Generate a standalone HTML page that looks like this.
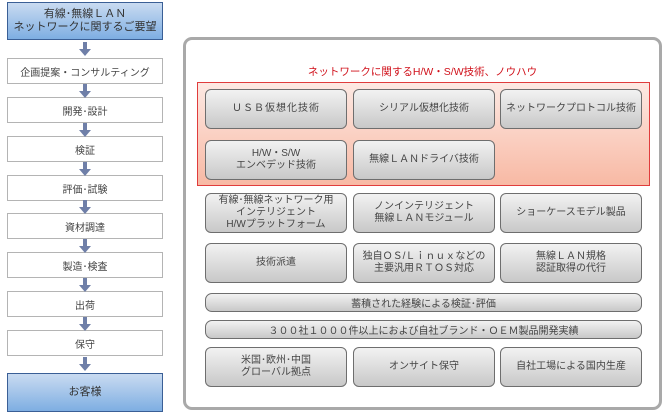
<!DOCTYPE html>
<html><head><meta charset="utf-8"><style>
*{margin:0;padding:0;box-sizing:border-box}
body{width:670px;height:414px;background:#fff;position:relative;overflow:hidden;font-family:"Liberation Sans","Noto Sans CJK JP",sans-serif;color:#444}
.a{position:absolute;display:flex;align-items:center;justify-content:center;text-align:center}
.s{left:7px;width:156px;height:26px;border:1px solid #b4b4b4;background:#fff;font-size:10px;color:#444}
.blue{left:7px;width:156px;border:1px solid #3a5f96;background:linear-gradient(#c9dbf1,#7eaee2);font-size:11px;color:#333;line-height:13px}
.ar{position:absolute;left:78px;width:14px;height:14px}
.panel{position:absolute;left:183px;top:37px;width:479px;height:373px;border:3px solid #a9a9a9;border-radius:9px;background:#fff}
.red{position:absolute;left:197px;top:82px;width:453px;height:104px;border:1px solid #e03c3c;background:linear-gradient(#fde9e3,#f8b9a4)}
.b{border:1px solid #6e6e6e;border-radius:6px;background:linear-gradient(#f2f2f2,#c8c8c8);font-size:10px;color:#444;line-height:12px;width:142px;height:40px}
.bar{left:205px;width:437px;height:19px;border:1px solid #6e6e6e;border-radius:7px;background:linear-gradient(#f2f2f2,#c8c8c8);font-size:10px;color:#444}
.t{position:absolute;left:183px;width:479px;top:64px;text-align:center;color:#d0101a;font-size:10.5px}
</style></head><body>
<div class="a blue" style="top:2px;height:38px">有線･無線ＬＡＮ<br>ネットワークに関するご要望</div>
<div class="a s" style="top:58px">企画提案・コンサルティング</div>
<div class="a s" style="top:97px">開発･設計</div>
<div class="a s" style="top:136px">検証</div>
<div class="a s" style="top:175px">評価･試験</div>
<div class="a s" style="top:213px">資材調達</div>
<div class="a s" style="top:252px">製造･検査</div>
<div class="a s" style="top:291px">出荷</div>
<div class="a s" style="top:330px">保守</div>
<div class="a blue" style="top:373px;height:39px">お客様</div>
<svg class="ar" style="top:42px" viewBox="0 0 14 14"><path d="M5 0h4v7h4l-6 7-6-7h4z" fill="#6f7fa8"/></svg>
<svg class="ar" style="top:84px" viewBox="0 0 14 14"><path d="M5 0h4v7h4l-6 7-6-7h4z" fill="#6f7fa8"/></svg>
<svg class="ar" style="top:123px" viewBox="0 0 14 14"><path d="M5 0h4v7h4l-6 7-6-7h4z" fill="#6f7fa8"/></svg>
<svg class="ar" style="top:162px" viewBox="0 0 14 14"><path d="M5 0h4v7h4l-6 7-6-7h4z" fill="#6f7fa8"/></svg>
<svg class="ar" style="top:200px" viewBox="0 0 14 14"><path d="M5 0h4v7h4l-6 7-6-7h4z" fill="#6f7fa8"/></svg>
<svg class="ar" style="top:239px" viewBox="0 0 14 14"><path d="M5 0h4v7h4l-6 7-6-7h4z" fill="#6f7fa8"/></svg>
<svg class="ar" style="top:278px" viewBox="0 0 14 14"><path d="M5 0h4v7h4l-6 7-6-7h4z" fill="#6f7fa8"/></svg>
<svg class="ar" style="top:317px" viewBox="0 0 14 14"><path d="M5 0h4v7h4l-6 7-6-7h4z" fill="#6f7fa8"/></svg>
<svg class="ar" style="top:357px" viewBox="0 0 14 14"><path d="M5 0h4v7h4l-6 7-6-7h4z" fill="#6f7fa8"/></svg>
<div class="panel"></div>
<div class="t">ネットワークに関するH/W・S/W技術、ノウハウ</div>
<div class="red"></div>
<div class="a b" style="left:205px;top:89px;letter-spacing:1px">ＵＳＢ仮想化技術</div>
<div class="a b" style="left:353px;top:89px">シリアル仮想化技術</div>
<div class="a b" style="left:500px;top:89px">ネットワークプロトコル技術</div>
<div class="a b" style="left:205px;top:140px">H/W・S/W<br>エンベデッド技術</div>
<div class="a b" style="left:353px;top:140px">無線ＬＡＮドライバ技術</div>
<div class="a b" style="left:205px;top:193px">有線･無線ネットワーク用<br>インテリジェント<br>H/Wプラットフォーム</div>
<div class="a b" style="left:353px;top:193px">ノンインテリジェント<br>無線ＬＡＮモジュール</div>
<div class="a b" style="left:500px;top:193px">ショーケースモデル製品</div>
<div class="a b" style="left:205px;top:243px">技術派遣</div>
<div class="a b" style="left:353px;top:243px">独自ＯＳ/Ｌｉｎｕｘなどの<br>主要汎用ＲＴＯＳ対応</div>
<div class="a b" style="left:500px;top:243px">無線ＬＡＮ規格<br>認証取得の代行</div>
<div class="a bar" style="top:293px">蓄積された経験による検証･評価</div>
<div class="a bar" style="top:320px">３００社１０００件以上におよび自社ブランド・ＯＥＭ製品開発実績</div>
<div class="a b" style="left:205px;top:347px">米国･欧州･中国<br>グローバル拠点</div>
<div class="a b" style="left:353px;top:347px">オンサイト保守</div>
<div class="a b" style="left:500px;top:347px">自社工場による国内生産</div>
</body></html>
